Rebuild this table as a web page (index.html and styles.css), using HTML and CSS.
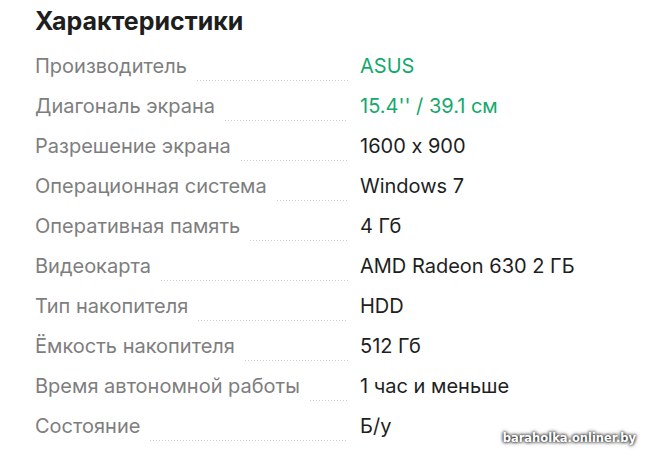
FILE: index.html
```html
<!DOCTYPE html>
<html lang="ru">
<head>
<meta charset="utf-8">
<link rel="stylesheet" href="styles.css">
</head>
<body>
<div class="page">
  <h2 class="title">Характеристики</h2>
  <div class="specs">
    <div class="row"><div class="label"><span class="name">Производитель</span><span class="dots"></span></div><div class="value link">ASUS</div></div>
    <div class="row"><div class="label"><span class="name">Диагональ экрана</span><span class="dots"></span></div><div class="value link">15.4'' / 39.1 см</div></div>
    <div class="row"><div class="label"><span class="name">Разрешение экрана</span><span class="dots"></span></div><div class="value">1600 x 900</div></div>
    <div class="row"><div class="label"><span class="name">Операционная система</span><span class="dots"></span></div><div class="value">Windows 7</div></div>
    <div class="row"><div class="label"><span class="name">Оперативная память</span><span class="dots"></span></div><div class="value">4 Гб</div></div>
    <div class="row"><div class="label"><span class="name">Видеокарта</span><span class="dots"></span></div><div class="value">AMD Radeon 630 2 ГБ</div></div>
    <div class="row"><div class="label"><span class="name">Тип накопителя</span><span class="dots"></span></div><div class="value">HDD</div></div>
    <div class="row"><div class="label"><span class="name">Ёмкость накопителя</span><span class="dots"></span></div><div class="value">512 Гб</div></div>
    <div class="row"><div class="label"><span class="name">Время автономной работы</span><span class="dots"></span></div><div class="value">1 час и меньше</div></div>
    <div class="row"><div class="label"><span class="name">Состояние</span><span class="dots"></span></div><div class="value">Б/у</div></div>
  </div>
  <div class="watermark">baraholka.onliner.by</div>
</div>
</body>
</html>
```
FILE: styles.css
```css
html, body {
  margin: 0;
  padding: 0;
  background: #fff;
}
body {
  width: 658px;
  height: 459px;
  overflow: hidden;
  font-family: Inter, "Noto Sans", sans-serif;
  font-feature-settings: "calt" 0;
}
.page {
  position: relative;
  height: 459px;
  padding: 6px 0 0 35px;
  box-sizing: border-box;
}
.title {
  margin: 0;
  font-size: 25px;
  line-height: 30px;
  font-weight: 700;
  color: #1e1e1e;
}
.specs {
  margin-top: 18px;
  display: flex;
  flex-direction: column;
}
.row {
  display: flex;
  height: 40px;
  align-items: flex-start;
  font-size: 20px;
  line-height: 24px;
}
.label {
  width: 313px;
  display: flex;
  align-items: flex-start;
  color: #7e7e7e;
}
.name {
  flex: none;
}
.dots {
  flex: 1;
  margin-left: 10px;
  margin-top: 26px;
  height: 1px;
  background-image: linear-gradient(to right, #cdcdcd 1px, transparent 1px);
  background-size: 3px 1px;
}
.value {
  margin-left: 12px;
  color: #1e1e1e;
}
.value.link {
  color: #14a96c;
}
.watermark {
  position: absolute;
  right: 22px;
  bottom: 14px;
  font-family: "DejaVu Sans", sans-serif;
  font-weight: 700;
  font-size: 11.5px;
  color: #fff;
  text-shadow: 0 0 3px #000, 0 0 4px #333;
}
```
